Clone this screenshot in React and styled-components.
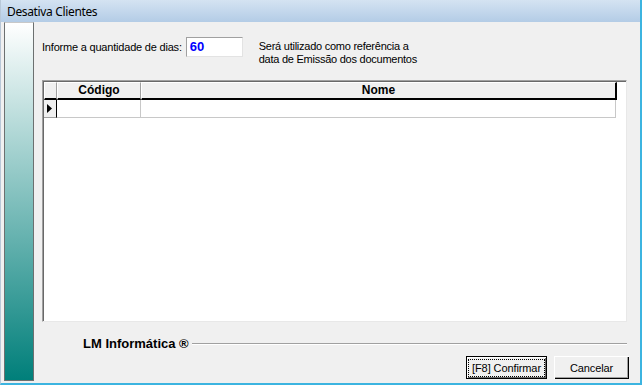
import React from "react";
import styled, { createGlobalStyle } from "styled-components";

const Global = createGlobalStyle`
  html, body { margin: 0; padding: 0; background: #f0f0f0; overflow: hidden; }
  #root { width: 642px; height: 385px; }
`;

const Window = styled.div`
  box-sizing: border-box;
  width: 642px;
  height: 385px;
  display: flex;
  flex-direction: column;
  background: #f0f0f0;
  border-left: 1px solid #b8c8d8;
  border-right: 2px solid #3cb4e0;
  border-bottom: 2px solid #3cb4e0;
  font-family: "Liberation Sans", Arial, sans-serif;
`;

const TitleBar = styled.div`
  height: 22px;
  flex: 0 0 22px;
  display: flex;
  align-items: center;
  padding-left: 6px;
  background: linear-gradient(to bottom, #d4e3f2, #b3cce6);
  font-family: "Noto Sans", "Liberation Sans", sans-serif;
  font-size: 12px;
  letter-spacing: -0.35px;
  color: #000;
`;

const Body = styled.div`
  flex: 1;
  display: flex;
  min-height: 0;
  padding: 0 0 2px 3px;
`;

const SidePanel = styled.div`
  width: 28px;
  border: 1px solid #6c7070;
  border-top-color: #c8c8c8;
  background: linear-gradient(to bottom, #ffffff, #007f7a);
`;

const Main = styled.div`
  flex: 1;
  display: flex;
  flex-direction: column;
  padding: 15px 9px 0 8px;
`;

const TopRow = styled.div`
  display: flex;
  align-items: flex-start;
  height: 20px;
`;

const Label = styled.span`
  font-size: 11px;
  letter-spacing: -0.2px;
  line-height: 20px;
  color: #000;
  margin-right: 4px;
  white-space: nowrap;
`;

const DaysInput = styled.div`
  box-sizing: border-box;
  width: 57px;
  height: 20px;
  border: 1px solid #a0a0a0;
  border-right-color: #e3e3e3;
  border-bottom-color: #e3e3e3;
  background: #fff;
  color: #0000ff;
  font-weight: bold;
  font-size: 13px;
  line-height: 18px;
  padding-left: 3px;
`;

const Note = styled.div`
  margin-left: 16px;
  margin-top: 3px;
  font-size: 11px;
  letter-spacing: -0.25px;
  line-height: 13px;
  color: #000;
  white-space: nowrap;
`;

const GridBox = styled.div`
  box-sizing: border-box;
  margin-top: 23px;
  width: 585px;
  height: 242px;
  border: 1px solid #a0a0a0;
  border-right-color: #e8e8e8;
  border-bottom-color: #e8e8e8;
  box-shadow: inset 1px 1px 0 #696969;
  background: #fff;
  padding: 1px 0 0 1px;
`;

const GridRow = styled.div`
  display: flex;
  height: 18px;
`;

const HeadCell = styled.div`
  box-sizing: border-box;
  width: ${(p) => p.$w}px;
  height: 18px;
  background: #f0f0f0;
  border-top: 1px solid #fff;
  border-left: 1px solid #fff;
  border-right: ${(p) => (p.$last ? "2px solid #000" : "1px solid #a0a0a0")};
  border-bottom: 2px solid #000;
  font-weight: bold;
  font-size: 12px;
  line-height: 15px;
  text-align: center;
  color: #000;
`;

const Indicator = styled.div`
  box-sizing: border-box;
  width: 13px;
  height: 18px;
  background: #f0f0f0;
  border-right: 1px solid #000;
  border-bottom: 1px solid #a0a0a0;
  display: flex;
  align-items: center;
  padding-left: 3px;
`;

const DataCell = styled.div`
  box-sizing: border-box;
  width: ${(p) => p.$w}px;
  height: 18px;
  background: #fff;
  border-right: 1px solid #c8c8c8;
  border-bottom: 1px solid #c8c8c8;
`;

const Footer = styled.div`
  display: flex;
  align-items: center;
  margin-top: 14px;
  padding-left: 41px;
  width: 585px;
  box-sizing: border-box;
`;

const Brand = styled.span`
  font-weight: bold;
  font-size: 13px;
  color: #000;
  white-space: nowrap;
  margin-right: 3px;
`;

const Rule = styled.div`
  flex: 1;
  height: 1px;
  background: #a0a0a0;
  box-shadow: 0 1px 0 #fff;
`;

const Buttons = styled.div`
  display: flex;
  justify-content: flex-end;
  gap: 7px;
  margin-top: 5px;
  width: 587px;
`;

const Button = styled.button`
  box-sizing: border-box;
  width: ${(p) => p.$w}px;
  height: 23px;
  padding: 0;
  background: #f0f0f0;
  font-family: "Liberation Sans", Arial, sans-serif;
  font-size: 11px;
  letter-spacing: -0.1px;
  white-space: nowrap;
  color: #000;
  border: ${(p) => (p.$default ? "1px solid #000" : "none")};
  box-shadow: ${(p) =>
    p.$default
      ? "inset 1px 1px 0 #fff, inset -1px -1px 0 #696969"
      : "inset 1px 1px 0 #fff, inset -1px -1px 0 #000, inset -2px -2px 0 #a0a0a0"};
  display: flex;
  align-items: center;
  justify-content: center;
`;

const Focus = styled.span`
  border: 1px dotted #000;
  padding: 2px 3px;
  line-height: 12px;
`;

export default function App() {
  return (
    <>
      <Global />
      <Window>
        <TitleBar>Desativa Clientes</TitleBar>
        <Body>
          <SidePanel />
          <Main>
            <TopRow>
              <Label>Informe a quantidade de dias:</Label>
              <DaysInput>60</DaysInput>
              <Note>
                Será utilizado como referência a
                <br />
                data de Emissão dos documentos
              </Note>
            </TopRow>
            <GridBox>
              <GridRow>
                <HeadCell $w={13} />
                <HeadCell $w={84}>Código</HeadCell>
                <HeadCell $w={476} $last>
                  Nome
                </HeadCell>
              </GridRow>
              <GridRow>
                <Indicator>
                  <svg width="5" height="9" viewBox="0 0 5 9">
                    <path d="M0 0 L5 4.5 L0 9 Z" fill="#000" />
                  </svg>
                </Indicator>
                <DataCell $w={84} />
                <DataCell $w={475} />
              </GridRow>
            </GridBox>
            <Footer>
              <Brand>LM Informática ®</Brand>
              <Rule />
            </Footer>
            <Buttons>
              <Button $w={81} $default>
                <Focus>[F8] Confirmar</Focus>
              </Button>
              <Button $w={75}>Cancelar</Button>
            </Buttons>
          </Main>
        </Body>
      </Window>
    </>
  );
}
